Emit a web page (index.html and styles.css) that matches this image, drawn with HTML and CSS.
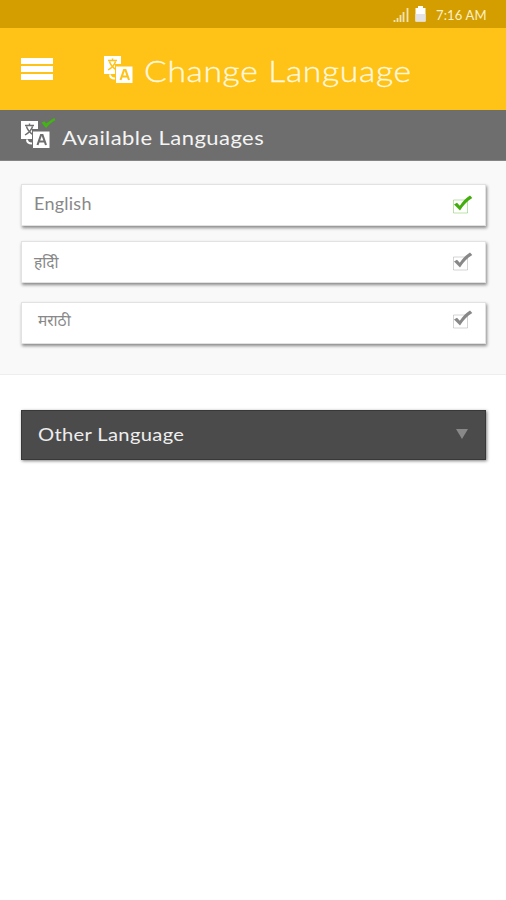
FILE: index.html
```html
<!DOCTYPE html>
<html lang="en">
<head>
<meta charset="utf-8">
<title>Change Language</title>
<link rel="stylesheet" href="styles.css">
</head>
<body>
<svg class="defs" width="0" height="0" aria-hidden="true">
  <symbol id="translate" viewBox="0 0 30 28">
    <path d="M0 0h17v8h-6v10H0z" fill="#fff"/>
    <path d="M4 4.500h9M8.500 2.500v2M5.500 5.500c1 4 4 6.500 7 8.500M11.500 5.500c-1 4-4 6.500-7.500 8.500" fill="none" stroke="currentColor" stroke-width="1.400"/>
    <path d="M6 18.500c0 3 2 4 5 4" fill="none" stroke="#fff" stroke-width="2"/>
    <path d="M11.500 10H29v17.500H11.500z" fill="#fff" stroke="currentColor" stroke-width="1"/>
    <path d="M16.500 24l3.500-10h1.500l3.500 10M18 20.500h5.500" fill="none" stroke="currentColor" stroke-width="2.100"/>
  </symbol>
  <symbol id="check" viewBox="0 0 22 20">
    <path d="M2.500 5h14v13h-14z" fill="#fff" stroke="currentColor" stroke-opacity=".35" stroke-width="1"/>
    <path d="M3 9.500l3-1.800 2.800 3C12 6 15 3 19 .5l2.300 2.600C16 6 12.500 10.500 9 15.500 7 13.500 5 11.500 3 9.500z" fill="currentColor"/>
  </symbol>
</svg>
<div class="status">
  <svg class="signal" width="17" height="16" viewBox="0 0 17 16"><path d="M1.500 13v2M4.500 11v4M7.500 8v7M10.500 5v10M14.500 1v14" stroke="#f3e3b4" stroke-width="1.800"/></svg>
  <svg class="battery" width="11" height="16" viewBox="0 0 11 16"><path d="M3 0h5v2h2.500v13.500H.5V2H3z" fill="#fff"/><path d="M.5 8h10v7.500H.5z" fill="#e3e2e7"/></svg>
  <span class="time">7:16 AM</span>
</div>
<header class="header">
  <div class="menu"><i></i><i></i><i></i></div>
  <svg class="translate"><use href="#translate"/></svg>
  <h1>Change Language</h1>
</header>
<div class="subheader">
  <div class="badged">
    <svg class="translate"><use href="#translate"/></svg>
    <svg class="tick" viewBox="0 0 15 12"><path d="M0 5l3-1.500 2 2.500C8 4 11 1 14 0l1 2.500C11 4.500 8 7 5 11 3 9 1 7 0 5z" fill="#42b414"/></svg>
  </div>
  <h2>Available Languages</h2>
</div>
<main class="languages">
  <div class="option english selected"><span>English</span><svg class="check"><use href="#check"/></svg></div>
  <div class="option hindi"><span lang="hi">हदिी</span><svg class="check"><use href="#check"/></svg></div>
  <div class="option marathi"><span lang="mr">मराठी</span><svg class="check"><use href="#check"/></svg></div>
</main>
<div class="other"><span>Other Language</span><i class="arrow"></i></div>
</body>
</html>
```
FILE: styles.css
```css
* { box-sizing: border-box; }
body { margin: 0; height: 900px; background: #fff; font-family: Lato, "Noto Sans", sans-serif; overflow: hidden; }
.defs { display: block; height: 0; }
h1, h2 { margin: 0; white-space: nowrap; }
h1, h2, .other span { transform-origin: left center; }
.status { height: 28px; background: #d49e00; display: flex; align-items: center; justify-content: flex-end; padding: 2px 19px 0 0; color: #fdf0c8; }
.signal { margin-right: 5px; }
.battery { margin: -3px 10px 0 0; }
.time { width: 51px; font-size: 13px; letter-spacing: .15px; white-space: nowrap; }
.header { height: 82px; background: #ffc216; color: #ffc216; display: flex; align-items: flex-start; padding-left: 21px; }
.menu { width: 32px; margin: 30px 51px 0 0; display: flex; flex-direction: column; gap: 2px; }
.menu i { height: 6px; background: #fff; }
.translate { display: block; width: 30px; height: 28px; flex: none; }
.header .translate { margin-top: 28px; }
h1 { color: #fff8df; font-weight: 300; font-size: 30px; line-height: 36px; letter-spacing: .6px; margin: 24px 0 0 10px; -webkit-text-stroke: .35px #fff8df; transform: scaleX(1.12); }
.subheader { height: 51px; background: #6e6e6e; color: #6e6e6e; border-bottom: 1px solid #858585; display: flex; align-items: flex-start; padding-left: 21px; }
.badged { position: relative; margin-top: 11px; }
.tick { position: absolute; left: 20px; top: -3px; width: 15px; height: 11px; }
h2 { color: #f4f4f4; font-weight: 400; font-size: 20px; line-height: 24px; letter-spacing: .4px; margin: 15px 0 0 11px; transform: scaleX(1.1); }
.languages { height: 214px; background: #f9f9f9; border-bottom: 1px solid #eee; padding: 23px 20px 0 21px; }
.option { height: 42px; background: #fff; border: 1px solid #e2e2e2; box-shadow: 1px 2px 3px rgba(0,0,0,.45); display: flex; justify-content: space-between; align-items: center; padding: 0 12px; color: #888; }
.option span { font-size: 18px; letter-spacing: .25px; margin-top: -4px; }
.check { width: 22px; height: 20px; }
.selected .check { color: #42ad0c; }
.hindi { margin-top: 15px; }
.marathi { margin-top: 19px; padding-left: 16px; }
.hindi span, .marathi span { font-family: "Noto Sans Devanagari", "Noto Sans", sans-serif; font-size: 15.500px; letter-spacing: 0; }
.hindi span { margin-top: 4px; }
.marathi span { margin-top: -2px; }
.marathi .check { margin-top: -6px; }
.other { height: 50px; margin: 35px 20px 0 21px; background: #4b4b4b; border: 1px solid #383838; box-shadow: 1px 1px 3px rgba(0,0,0,.5); display: flex; align-items: center; justify-content: space-between; padding: 0 17px 0 16px; color: #eee; font-size: 18px; }
.other span { letter-spacing: .3px; transform: translateY(-1px) scaleX(1.12); }
.arrow { border: 6px solid transparent; border-top: 10px solid #888; border-bottom: 0; margin-top: -3px; }
```
